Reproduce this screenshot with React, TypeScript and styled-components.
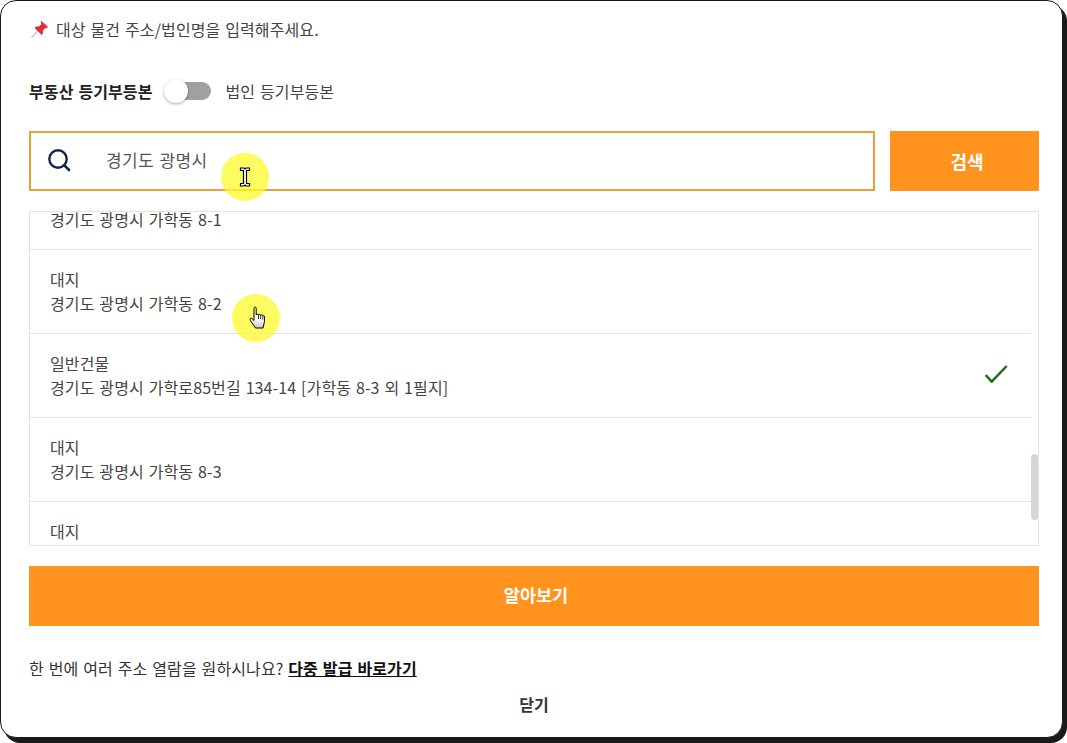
import React from 'react';
import styled, { createGlobalStyle } from 'styled-components';

const rows = [
  { kind: '대지', address: '경기도 광명시 가학동 8-1' },
  { kind: '대지', address: '경기도 광명시 가학동 8-2' },
  { kind: '일반건물', address: '경기도 광명시 가학로85번길 134-14 [가학동 8-3 외 1필지]', selected: true },
  { kind: '대지', address: '경기도 광명시 가학동 8-3' },
  { kind: '대지', address: '경기도 광명시 가학동 8-4' },
];

export default function App() {
  return (
    <Page>
      <GlobalStyle />
      <Modal>
        <Notice>
          <Pin viewBox="0 0 18 18">
            <path d="M0.500 17.500L7 10.500" stroke="#c4c4c4" strokeWidth="1.200" />
            <path
              d="M10.500 1.500l6 5.500-1.300 1-1.400-.3-2.300 2.800c.5 1.600.1 3-.8 3.900L4 7.900c1-1 2.400-1.300 3.900-.8l2.900-2.600-.3-3z"
              fill="#e8283f"
              stroke="#e8283f"
              strokeWidth="1"
              strokeLinejoin="round"
            />
          </Pin>
          대상 물건 주소/법인명을 입력해주세요.
        </Notice>

        <ToggleRow>
          <ToggleLabel $active>부동산 등기부등본</ToggleLabel>
          <Toggle>
            <Knob />
          </Toggle>
          <ToggleLabel>법인 등기부등본</ToggleLabel>
        </ToggleRow>

        <SearchRow>
          <SearchBox>
            <SearchIcon viewBox="0 0 24 24">
              <circle cx="11" cy="11" r="8.700" fill="none" stroke="#14264d" strokeWidth="2.400" />
              <path d="M17.500 17.500L22 22" stroke="#14264d" strokeWidth="2.600" strokeLinecap="round" />
            </SearchIcon>
            <SearchText>경기도 광명시</SearchText>
            <CursorHalo $variant="text">
              <svg width="12" height="20" viewBox="0 0 12 20">
                <path d="M1.500 1h3.500l1 1 1-1h3.500v2.500H7.500v13h3v2.500H7l-1-1-1 1H1.500v-2.500h3v-13h-3z" fill="#fff" stroke="#000" strokeWidth="1.200" />
              </svg>
            </CursorHalo>
          </SearchBox>
          <SearchButton>검색</SearchButton>
        </SearchRow>

        <ResultBox>
          <ResultTrack>
            {rows.map((row) => (
              <ResultRow key={row.address}>
                <ResultText>
                  <span>{row.kind}</span>
                  <span>{row.address}</span>
                </ResultText>
                {row.selected && (
                  <Check viewBox="0 0 24 18">
                    <path d="M1.700 10l6 6.700L22.700 1" fill="none" stroke="#1c6e22" strokeWidth="2.500" />
                  </Check>
                )}
              </ResultRow>
            ))}
          </ResultTrack>
          <ScrollThumb />
          <CursorHalo $variant="hand">
            <svg width="18" height="24" viewBox="0 0 18 24">
              <defs>
                <linearGradient id="hand" x1="0" y1="0" x2="0" y2="1">
                  <stop offset="0.500" stopColor="#fff" />
                  <stop offset="1" stopColor="#c8c8c8" />
                </linearGradient>
              </defs>
              <path
                d="M5 2.200c0-1.500 2.200-1.500 2.200 0V9c.1-1 2.200-1 2.300 0 .1-.9 2.100-.9 2.200.2.300-.8 2-.6 2.100.5.500-.3 1.700-.2 1.700 1v4.800L14 22H6.500L1.200 14.200c-.8-1.300.8-2.600 1.900-1.500L5 14.500z"
                fill="url(#hand)"
                stroke="#000"
                strokeWidth="1"
                strokeLinejoin="round"
              />
              <path d="M9.500 9v4M11.700 9.200v4M13.800 10v3.500" stroke="#000" strokeWidth="0.800" />
            </svg>
          </CursorHalo>
        </ResultBox>

        <SubmitButton>알아보기</SubmitButton>

        <BulkLine>
          한 번에 여러 주소 열람을 원하시나요? <BulkLink href="#">다중 발급 바로가기</BulkLink>
        </BulkLine>

        <CloseButton>닫기</CloseButton>
      </Modal>
    </Page>
  );
}

const GlobalStyle = createGlobalStyle`
  html, body {
    margin: 0;
    background: #fff;
  }

  body {
    font-family: "Noto Sans CJK KR", "Noto Sans", sans-serif;
    font-size: 16px;
    word-spacing: 1.2px;
    letter-spacing: 0.1px;
    color: #333;
  }
`;

const Page = styled.div`
  width: 1067px;
  height: 743px;
  overflow: hidden;
`;

const Modal = styled.div`
  box-sizing: border-box;
  width: 1063px;
  height: 738px;
  padding: 0 23px 0 28px;
  background: #fff;
  border: 1px solid #1a1a1a;
  border-radius: 16px;
  box-shadow: 4px 5px 0 #1a1a1a;
  display: flex;
  flex-direction: column;
`;

const Notice = styled.div`
  height: 24px;
  margin-top: 16px;
  display: flex;
  align-items: center;
  gap: 7px;
  padding-left: 2px;
  line-height: 24px;
  color: #444;
`;

const Pin = styled.svg`
  width: 18px;
  height: 18px;
`;

const ToggleRow = styled.div`
  margin-top: 38px;
  height: 24px;
  display: flex;
  align-items: center;
`;

const ToggleLabel = styled.span<{ $active?: boolean }>`
  font-weight: ${(p) => (p.$active ? 700 : 400)};
  color: ${(p) => (p.$active ? '#222' : '#444')};
`;

const Toggle = styled.div`
  position: relative;
  width: 46px;
  height: 18px;
  margin: 0 15px 0 12px;
  border-radius: 9px;
  background: #a0a0a0;
`;

const Knob = styled.div`
  position: absolute;
  left: -1px;
  top: -3px;
  width: 24px;
  height: 24px;
  border-radius: 50%;
  background: #fff;
  box-shadow: 0 1px 3px rgba(0, 0, 0, 0.35);
`;

const SearchRow = styled.div`
  margin-top: 28px;
  display: flex;
  gap: 15px;
`;

const SearchBox = styled.div`
  position: relative;
  box-sizing: border-box;
  flex: 1;
  height: 60px;
  padding: 0 0 3px 16px;
  display: flex;
  align-items: center;
  border: 2px solid #e8a038;
`;

const SearchIcon = styled.svg`
  width: 24px;
  height: 24px;
`;

const SearchText = styled.span`
  margin-left: 35px;
  font-size: 17px;
  letter-spacing: 0.4px;
  color: #555;
`;

const CursorHalo = styled.div<{ $variant: 'text' | 'hand' }>`
  position: absolute;
  box-sizing: border-box;
  width: 48px;
  height: 48px;
  padding-left: ${(p) => (p.$variant === 'hand' ? '3px' : '0')};
  border-radius: 50%;
  background: rgba(252, 250, 50, 0.78);
  display: flex;
  align-items: center;
  justify-content: center;
  left: ${(p) => (p.$variant === 'text' ? '190px' : '202px')};
  top: ${(p) => (p.$variant === 'text' ? '20px' : '82px')};
`;

const SearchButton = styled.button`
  width: 149px;
  height: 60px;
  padding: 0 0 0 5px;
  border: 0;
  background: #ff931e;
  color: #fff;
  font: 700 18px "Noto Sans CJK KR", sans-serif;
`;

const ResultBox = styled.div`
  position: relative;
  box-sizing: border-box;
  height: 335px;
  margin-top: 20px;
  overflow: hidden;
  border: 1px solid #e3e3e3;
`;

const ResultTrack = styled.div`
  margin: -46px 7px 0 0;
`;

const ResultRow = styled.div`
  box-sizing: border-box;
  height: 84px;
  padding: 17px 23px 18px 20px;
  display: flex;
  align-items: center;
  justify-content: space-between;
  border-bottom: 1px solid #e3e3e3;
`;

const ResultText = styled.div`
  display: flex;
  flex-direction: column;
  line-height: 24px;
  color: #444;
`;

const Check = styled.svg`
  width: 24px;
  height: 18px;
  margin-bottom: 2px;
`;

const ScrollThumb = styled.div`
  position: absolute;
  right: 0;
  top: 242px;
  width: 7px;
  height: 66px;
  border-radius: 4px;
  background: #d6d6d6;
`;

const SubmitButton = styled.button`
  height: 60px;
  margin-top: 20px;
  padding: 0 0 3px 4px;
  border: 0;
  background: #ff931e;
  color: #fff;
  font: 700 17.5px "Noto Sans CJK KR", sans-serif;
`;

const BulkLine = styled.div`
  margin-top: 30px;
  line-height: 24px;
  color: #333;
`;

const BulkLink = styled.a`
  font-weight: 700;
  color: #111;
  text-decoration: underline;
`;

const CloseButton = styled.button`
  align-self: center;
  margin-top: 12px;
  padding: 0;
  border: 0;
  background: none;
  color: #333;
  font: 700 16px/24px "Noto Sans CJK KR", sans-serif;
`;
